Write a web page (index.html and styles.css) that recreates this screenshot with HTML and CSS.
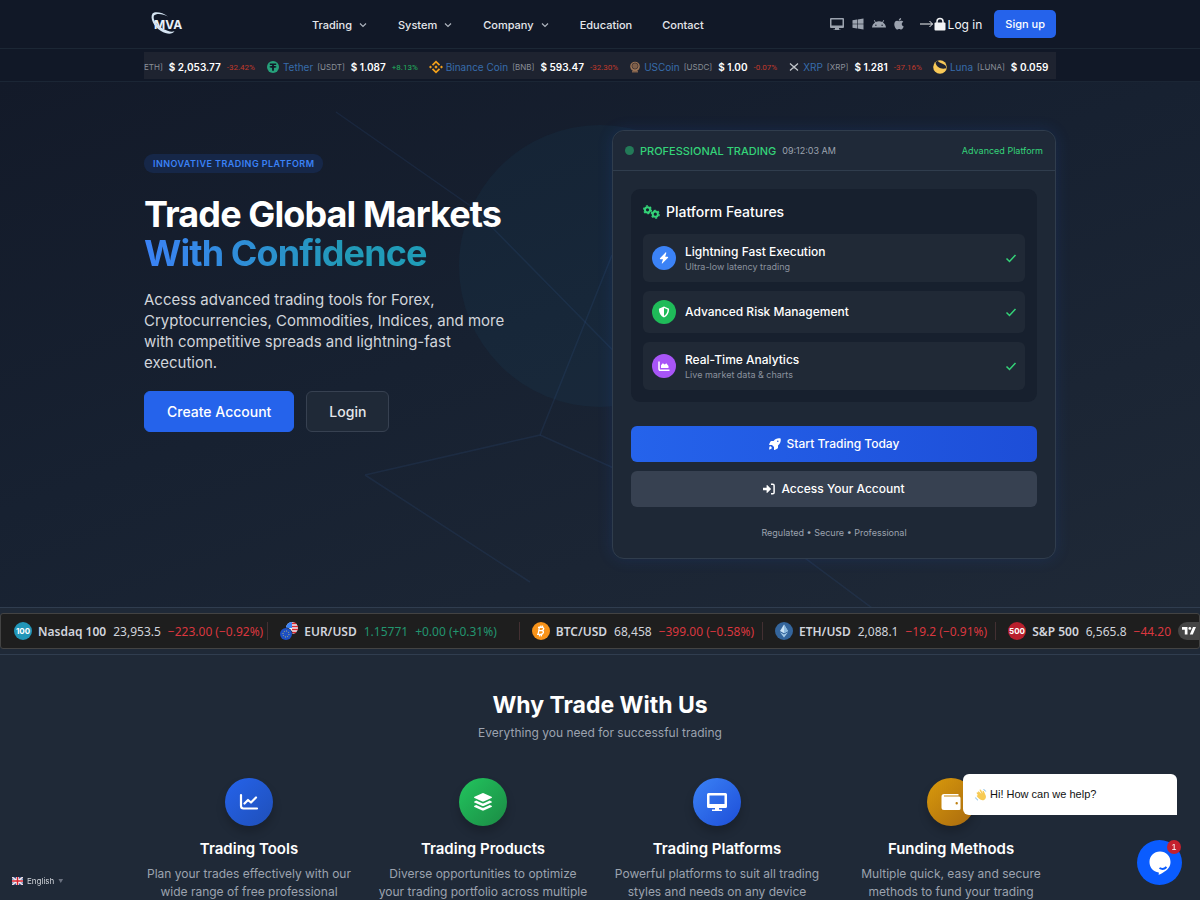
FILE: index.html
```html
<!DOCTYPE html>
<html lang="en">
<head>
<meta charset="utf-8">
<meta name="viewport" content="width=device-width, initial-scale=1">
<title>MVA – Trade Global Markets With Confidence</title>
<link rel="stylesheet" href="styles.css">
</head>
<body>
<header class="site-header">
  <div class="container header-row">
    <a class="logo" href="#" aria-label="MVA home">
      <svg width="42" height="28" viewBox="0 0 42 28">
        <text class="logo-text" x="10" y="19">MVA</text>
        <path d="M24 6.500C19 2.500 11 1 8.500 3.500C5.500 8 10 17 17 21C23 24.500 28.500 24.500 30.500 21C28 22.500 24 21.500 18.500 18.500C12 15 8.500 9 10 5.500C12 3 19 3.500 24 6.500z" fill="#d5e4f2"/>
      </svg>
    </a>
    <nav class="main-nav" aria-label="Main">
      <a href="#">Trading <svg class="chev" viewBox="0 0 10 10"><path d="M2 3.500l3 3 3-3"/></svg></a>
      <a href="#">System <svg class="chev" viewBox="0 0 10 10"><path d="M2 3.500l3 3 3-3"/></svg></a>
      <a href="#">Company <svg class="chev" viewBox="0 0 10 10"><path d="M2 3.500l3 3 3-3"/></svg></a>
      <a href="#">Education</a>
      <a href="#">Contact</a>
    </nav>
    <div class="header-actions">
      <div class="platforms">
        <a href="#" aria-label="Desktop"><svg width="14" height="14" viewBox="0 0 14 14"><path fill-rule="evenodd" d="M1 1h12a1 1 0 0 1 1 1v8a1 1 0 0 1-1 1H9v1.500h1.500V13h-7v-.5H5V11H1a1 1 0 0 1-1-1V2a1 1 0 0 1 1-1zm.5 1.500v6h11v-6z"/></svg></a>
        <a href="#" aria-label="Windows"><svg width="12" height="12" viewBox="0 0 12 12"><path d="M.5 2.200L5 1.500v4.200H.5zM5.600 1.400L11.500.5v5.200H5.600zM.5 6.300H5v4.200l-4.500-.7zM5.600 6.300h5.900v5.200l-5.900-.9z"/></svg></a>
        <a href="#" aria-label="Android"><svg width="14" height="10" viewBox="0 0 14 10"><path fill-rule="evenodd" d="M0 8.500C.2 6 1.400 4.500 3 3.400L1.800 1.300l.7-.4 1.200 2.100c2-.9 4.600-.9 6.600 0L11.500.9l.7.400L11 3.400c1.600 1.100 2.800 2.600 3 5.100zM3.200 6.300a.7.700 0 1 0 1.400 0 .7.700 0 1 0-1.400 0zm6.200 0a.7.700 0 1 0 1.400 0 .7.700 0 1 0-1.400 0z"/></svg></a>
        <a href="#" aria-label="Apple"><svg width="10" height="12" viewBox="0 0 10 12"><path d="M7.800 6.200c0-1.200.6-1.800 1.500-2.400-.6-.8-1.400-1.100-2.200-1.100-.9 0-1.500.5-2 .5s-1.200-.5-2-.5C1.300 2.800.3 4.300.3 6.200c0 2.300 1.600 5.300 3 5.300.7 0 1-.5 1.900-.5s1.100.5 1.900.500c1.200 0 2.200-1.900 2.600-3-1.200-.5-1.900-1.300-1.900-2.300zM6.500 1.900C7 1.300 7.200.7 7.100 0 6.400.1 5.700.500 5.300 1c-.4.500-.7 1-.6 1.600.7 0 1.400-.2 1.800-.7z"/></svg></a>
      </div>
      <a class="login-link" href="#">
        <svg width="14" height="12" viewBox="0 0 14 12"><path d="M0 6h12.500M9.500 3l3 3-3 3" fill="none" stroke="#f3f4f6"/></svg>
        <svg width="12" height="14" viewBox="0 0 12 14"><path d="M3 6V4.500a3 3 0 0 1 6 0V6" fill="none" stroke="#f3f4f6" stroke-width="1.500"/><rect x=".5" y="5.500" width="11" height="8" rx="1" fill="#f3f4f6"/></svg>
        <span>Log in</span>
      </a>
      <a class="btn-signup" href="#">Sign up</a>
    </div>
  </div>
</header>

<div class="coin-bar">
  <div class="container">
    <div class="coin-ticker">
      <div class="coin"><span class="sym">ETH]</span><b>$ 2,053.77</b><span class="chg down">-32.42%</span></div>
      <div class="coin"><svg class="coin-icon" viewBox="0 0 14 14"><circle cx="7" cy="7" r="6" fill="#26a17b"/><path d="M3.800 3.500h6.400v1.600H7.900v1c1.500.1 2.600.4 2.600.8s-1.100.7-2.600.8v3H6.100v-3c-1.500-.1-2.600-.4-2.600-.8s1.100-.7 2.600-.8v-1H3.800z" fill="#111827"/></svg><a href="#">Tether</a><span class="sym">[USDT]</span><b>$ 1.087</b><span class="chg up">+8.13%</span></div>
      <div class="coin"><svg class="coin-icon" viewBox="0 0 14 14"><g fill="none" stroke="#f3a11b" stroke-width="1.800"><path d="M3.500 5.200L7 1.700l3.500 3.500M3.500 8.800L7 12.300l3.500-3.500"/></g><path d="M7 5.300L8.700 7 7 8.700 5.300 7zM1.500 5.500L3 7 1.500 8.500 0 7zM12.500 5.500L14 7l-1.500 1.500L11 7z" fill="#f3a11b"/></svg><a href="#">Binance Coin</a><span class="sym">[BNB]</span><b>$ 593.47</b><span class="chg down">-32.30%</span></div>
      <div class="coin"><svg class="coin-icon narrow" viewBox="0 0 12 14"><circle cx="6" cy="6.500" r="4.800" fill="#9b7355"/><path d="M3 11h6v1.500H3z" fill="#80604b"/><circle cx="6" cy="6" r="3" fill="none" stroke="#493a36"/><path d="M4 5h4M4 7h4" stroke="#493a36" stroke-width=".7"/></svg><a href="#">USCoin</a><span class="sym">[USDC]</span><b>$ 1.00</b><span class="chg down">-0.07%</span></div>
      <div class="coin"><svg class="coin-icon narrow" viewBox="0 0 12 14"><path d="M2 3.500l2.500 2.300a2.200 2.200 0 0 0 3 0L10 3.500M2 10.500l2.500-2.300a2.200 2.200 0 0 1 3 0L10 10.500" fill="none" stroke="#c3c7cc" stroke-width="1.200"/></svg><a href="#">XRP</a><span class="sym">[XRP]</span><b>$ 1.281</b><span class="chg down">-37.16%</span></div>
      <div class="coin"><svg class="coin-icon" viewBox="0 0 14 14"><circle cx="7" cy="7" r="6.800" fill="#f8c957"/><path d="M2.500 2.500C3.500 7.500 8 9.500 13.200 8.300C13.800 6.500 12 4.500 9 3.500C6.500 2.700 4.500 1.500 5 .5C4 1 3 1.700 2.500 2.500z" fill="#202431"/></svg><a href="#">Luna</a><span class="sym">[LUNA]</span><b>$ 0.059</b></div>
    </div>
  </div>
</div>

<main>
<section class="hero">
  <svg class="hero-art" viewBox="0 0 1200 525" preserveAspectRatio="xMidYMid slice" aria-hidden="true">
    <circle cx="600" cy="184" r="141" fill="#1f8fb8" fill-opacity=".06"/>
    <g fill="none" stroke="#3b6fb0" stroke-opacity=".13" stroke-width="1.500"><path d="M336 30L472 125 650 306"/><path d="M365 393L540 353 612 173M365 393L530 500"/><path d="M540 353L790 465 872 526"/></g>
  </svg>
  <div class="container hero-grid">
    <div class="hero-copy">
      <span class="pill">INNOVATIVE TRADING PLATFORM</span>
      <h1>Trade Global Markets<br><span class="grad">With Confidence</span></h1>
      <p class="lead">Access advanced trading tools for Forex, Cryptocurrencies, Commodities, Indices, and more with competitive spreads and lightning-fast execution.</p>
      <div class="cta-row">
        <a class="cta cta-primary" href="#">Create Account</a>
        <a class="cta cta-ghost" href="#">Login</a>
      </div>
    </div>

    <div class="card">
      <div class="card-head">
        <span class="dot"></span>
        <span class="card-title">PROFESSIONAL TRADING</span>
        <time class="clock">09:12:03 AM</time>
        <span class="tag">Advanced Platform</span>
      </div>
      <div class="card-body">
        <div class="panel">
          <h2 class="panel-title"><svg width="17" height="14" viewBox="0 0 17 14"><g fill="none" stroke="#34d378"><circle cx="4.500" cy="4.800" r="2.600" stroke-width="2"/><circle cx="4.500" cy="4.800" r="3.900" stroke-width="1.300" stroke-dasharray="2.040"/><circle cx="12.300" cy="9.200" r="2.600" stroke-width="2"/><circle cx="12.300" cy="9.200" r="3.900" stroke-width="1.300" stroke-dasharray="2.040"/></g></svg>Platform Features</h2>
          <ul class="feature-list">
            <li>
              <span class="badge blue"><svg width="12" height="12" viewBox="0 0 12 12"><path d="M7.500.5L2 6.300c-.3.4-.1.900.4.900H5L3.800 11c-.2.600.3.700.7.300L10 5.700c.4-.4.100-.9-.4-.9H7.200L8.300 1c.1-.6-.4-.9-.8-.5z"/></svg></span>
              <span class="ft"><strong>Lightning Fast Execution</strong><small>Ultra-low latency trading</small></span>
              <svg class="tick" viewBox="0 0 12 12"><path d="M1.500 6.500l3 3 6-6.500"/></svg>
            </li>
            <li>
              <span class="badge green"><svg width="12" height="12" viewBox="0 0 12 12"><path fill-rule="evenodd" d="M6 .5l4.600 1.900c.4.200.5.500.5.800C11 7 9.300 10 6 11.500 2.700 10 1 7 .9 3.200c0-.3.100-.6.500-.8zM6 2v8c2.300-1.200 3.500-3.500 3.600-6.400z"/></svg></span>
              <span class="ft"><strong>Advanced Risk Management</strong></span>
              <svg class="tick" viewBox="0 0 12 12"><path d="M1.500 6.500l3 3 6-6.500"/></svg>
            </li>
            <li>
              <span class="badge purple"><svg width="12" height="12" viewBox="0 0 12 12"><path d="M1 1.500V9a1.200 1.200 0 0 0 1.200 1.200H11.500" fill="none" stroke="#fff" stroke-width="1.500"/><path d="M3 8V5.200l1.800-2 2 1.300 1.500-1.200L10.500 6v2z"/></svg></span>
              <span class="ft"><strong>Real-Time Analytics</strong><small>Live market data &amp; charts</small></span>
              <svg class="tick" viewBox="0 0 12 12"><path d="M1.500 6.500l3 3 6-6.500"/></svg>
            </li>
          </ul>
        </div>
        <div class="card-actions">
          <a class="wide wide-primary" href="#"><svg width="12" height="12" viewBox="0 0 12 12"><path fill-rule="evenodd" d="M11.600.4C8.500-.2 6.200.8 4.600 3H2.400c-.4 0-.7.200-.9.500L.1 6.200c-.2.400 0 .8.500.8H3l2 2v2.400c0 .5.400.7.800.5l2.700-1.400c.3-.2.500-.5.500-.9V7.400c2.200-1.600 3.200-3.900 2.600-7zM8 3.300a.8.800 0 1 0 1.600 0 .8.800 0 1 0-1.600 0z"/><path d="M.7 8.600c.9-.9 2.700 1 1.900 2C2 11.300.2 11.700.2 11.700S.1 9.200.7 8.600z"/></svg>Start Trading Today</a>
          <a class="wide wide-muted" href="#"><svg width="12" height="12" viewBox="0 0 12 12"><path d="M8 1.300h1.800a1.300 1.300 0 0 1 1.300 1.300v6.800a1.300 1.300 0 0 1-1.300 1.300H8" fill="none" stroke="#fff" stroke-width="1.500"/><path d="M0 4.800h3.600V2.600c0-.5.500-.6.800-.4l3.500 3.500c.2.200.2.400 0 .6L4.400 9.800c-.3.300-.8.100-.8-.4V7.200H0z"/></svg>Access Your Account</a>
        </div>
        <p class="card-note">Regulated • Secure • Professional</p>
      </div>
    </div>
  </div>
</section>

<section class="market-strip" aria-label="Market quotes">
  <div class="quotes">
    <div class="quote"><svg class="q-icon" viewBox="0 0 18 18"><circle cx="9" cy="9" r="9" fill="#2196b8"/><text class="q-num" x="9" y="12">100</text></svg><b>Nasdaq 100</b><span>23,953.5</span><span class="neg">−223.00 (−0.92%)</span></div>
    <div class="quote q-eur"><svg class="q-icon" viewBox="0 0 18 18"><circle cx="12" cy="6" r="6" fill="#e9eef8"/><path d="M12 0a6 6 0 0 0-6 6h6z" fill="#3b82f6"/><path d="M12 1.500h4M12 4.500h6M12 7.500h6M10 10.500h6" stroke="#d9272e" stroke-width="1.500"/><circle cx="6" cy="12" r="6.500" fill="#1e1e1e"/><circle cx="6" cy="12" r="6" fill="#1d4fc4"/><circle cx="6" cy="12" r="3" fill="none" stroke="#c9c56b" stroke-dasharray="1 1.300"/></svg><b>EUR/USD</b><span class="pos">1.15771</span><span class="pos">+0.00 (+0.31%)</span></div>
    <div class="quote q-wide"><svg class="q-icon" viewBox="0 0 18 18"><circle cx="9" cy="9" r="9" fill="#f7931a"/><path d="M7.500 4.500L6 13M6 5.300h4c2.600 0 2.200 3.300-.7 3.300H7M6.600 8.700h3.200c2.600 0 2 3.600-1.200 3.600H5M9 3.500l-.3 1.700M7.700 12.500l-.3 1.800M10.700 3.700l-.3 1.700M9.500 12.500l-.3 1.800" fill="none" stroke="#fff" stroke-width="1.300"/></svg><b>BTC/USD</b><span>68,458</span><span class="neg">−399.00 (−0.58%)</span></div>
    <div class="quote q-wide"><svg class="q-icon" viewBox="0 0 18 18"><circle cx="9" cy="9" r="9" fill="#34659c"/><path d="M9 2.500L5 9l4 2.200L13 9z" fill="#c6e0f5"/><path d="M5 10.200L9 15.500l4-5.300-4 2.200z" fill="#a5cbe9"/><path d="M9 2.500V11.200L13 9z" fill="#8ebbe0"/></svg><b>ETH/USD</b><span>2,088.1</span><span class="neg">−19.2 (−0.91%)</span></div>
    <div class="quote"><svg class="q-icon" viewBox="0 0 18 18"><circle cx="9" cy="9" r="9" fill="#b9202d"/><text class="q-num" x="9" y="12">500</text></svg><b>S&amp;P 500</b><span>6,565.8</span><span class="neg">−44.20</span></div>
    <a class="tv" href="#" aria-label="TradingView"><svg width="14" height="8" viewBox="0 0 14 8"><path d="M0 0h5.500v7.500H2.800V2.700H0zM11 0h3l-3.200 7.500h-3z" fill="#fff"/><circle cx="7.800" cy="1.400" r="1.400" fill="#fff"/></svg></a>
  </div>
</section>

<section class="why">
  <div class="container">
    <h2>Why Trade With Us</h2>
    <p class="why-sub">Everything you need for successful trading</p>
    <div class="why-grid">
      <article>
        <span class="orb orb-blue"><svg width="20" height="20" viewBox="0 0 20 20"><path d="M2 3v11a2.500 2.500 0 0 0 2.500 2.500H18" class="ln"/><path d="M5.500 11.500L9 8l3 2.500 5-5" class="ln"/></svg></span>
        <h3>Trading Tools</h3><p>Plan your trades effectively with our wide range of free professional</p>
      </article>
      <article>
        <span class="orb orb-green"><svg width="20" height="20" viewBox="0 0 20 20"><path d="M9.300 1.200a1.500 1.500 0 0 1 1.400 0L18.500 4.700c.6.300.6 1 0 1.300l-7.800 3.500c-.5.200-1 .2-1.400 0L1.500 6c-.6-.3-.6-1 0-1.300zM3.200 8.600l5.500 2.500c.8.400 1.800.4 2.600 0l5.500-2.500 1.700.8c.6.300.6.900 0 1.200l-7.800 3.500c-.5.200-1 .2-1.400 0l-7.800-3.500c-.6-.3-.6-.9 0-1.200zM3.200 13l5.500 2.500c.8.400 1.800.4 2.600 0l5.500-2.500 1.700.8c.6.300.6.900 0 1.200l-7.800 3.500c-.5.200-1 .2-1.400 0L1.500 15c-.6-.3-.6-.9 0-1.200z"/></svg></span>
        <h3>Trading Products</h3><p>Diverse opportunities to optimize your trading portfolio across multiple</p>
      </article>
      <article>
        <span class="orb orb-sky"><svg width="22" height="20" viewBox="0 0 22 20"><path fill-rule="evenodd" d="M2.500 1h17A1.500 1.500 0 0 1 21 2.500v12a1.500 1.500 0 0 1-1.500 1.500H13v1.500h3V19H6v-1.500h3V16H2.500A1.500 1.500 0 0 1 1 14.500v-12A1.500 1.500 0 0 1 2.500 1zM3.500 3.500v8.500h15V3.500z"/></svg></span>
        <h3>Trading Platforms</h3><p>Powerful platforms to suit all trading styles and needs on any device</p>
      </article>
      <article>
        <span class="orb orb-gold"><svg width="20" height="18" viewBox="0 0 20 18"><path fill-rule="evenodd" d="M3 1h14.500v1.500H3v1h15a1.500 1.500 0 0 1 1.500 1.500v10.500a1.500 1.500 0 0 1-1.500 1.500H3A2.500 2.500 0 0 1 .5 14.500v-11A2.500 2.500 0 0 1 3 1zM14.500 10.300a1.200 1.200 0 1 0 2.400 0 1.200 1.200 0 1 0-2.400 0z"/></svg></span>
        <h3>Funding Methods</h3><p>Multiple quick, easy and secure methods to fund your trading</p>
      </article>
    </div>
  </div>
</section>
</main>

<button class="lang" type="button"><svg width="11" height="8" viewBox="0 0 11 8"><path d="M0 0h11v8H0z" fill="#33539b"/><path d="M0 0l11 8M11 0L0 8" stroke="#f0dfe0" stroke-width="1.600"/><path d="M5.500 0v8M0 4h11" stroke="#fff" stroke-width="2.800"/><path d="M5.500 0v8M0 4h11" stroke="#d8222f" stroke-width="1.500"/></svg>English<span class="caret">▼</span></button>

<div class="chat-bubble"><svg width="12" height="12" viewBox="0 0 12 12"><path d="M3.500 2l3 3-2-4c.5-.8 1.300-.5 1.600 0l1.700 3.200L7.500 2c.8-.4 1.300.1 1.600.7l1.700 4c.7 2.600-1.300 4.600-3.300 4.500C5 11 3 8.800 1.700 7c0-.9.700-1 1.300-.7L1.500 4c.2-.8.900-.9 1.500-.3z" fill="#f7ca54"/><path d="M8.500.5c1 .2 1.900 1 2.200 2M.7 8.500c.3 1.300 1 2.200 2.300 2.500" fill="none" stroke="#7cb8e4"/></svg>Hi! How can we help?</div>
<button class="chat-btn" type="button" aria-label="Open chat">
  <svg width="24" height="26" viewBox="0 0 24 26"><path d="M12 1.500c6 0 10.500 4.500 10.500 10.500 0 5.500-4 8.500-7 10.200-2 1.300-3.800 2.200-5 2.600.4-1 .4-1.600.3-2.400C5 21.500 1.500 17.500 1.500 12 1.500 6 6 1.500 12 1.500z" fill="#fff"/><path d="M11.500 18c2 1.200 5 1 7-1" fill="none" stroke="#0a5cff" stroke-width="2"/></svg>
  <span class="count">1</span>
</button>
</body>
</html>
```
FILE: styles.css
```css
* { box-sizing: border-box; }
body {
  margin: 0;
  height: 100vh;
  overflow: hidden;
  background: #1f2937;
  color: #fff;
  font-family: Inter, "Liberation Sans", sans-serif;
}
a { color: inherit; text-decoration: none; }
h1, h2, h3, p, ul { margin: 0; padding: 0; }
button { border: 0; font-family: inherit; cursor: pointer; }
svg { display: block; flex: none; }
.container { width: 76%; max-width: 1280px; margin: 0 auto; }

/* Header */
.site-header { background: #111827; border-bottom: 1px solid #1c2735; }
.header-row { display: flex; align-items: center; justify-content: space-between; height: 48px; }
.logo-text { font: 700 12px Inter, sans-serif; fill: #e8f1fa; }
.main-nav { display: flex; gap: 30px; padding-top: 2px; font-size: 11px; font-weight: 500; line-height: 16px; color: #e5e7eb; }
.main-nav a { display: flex; align-items: center; gap: 6px; }
.chev { width: 10px; height: 10px; fill: none; stroke: #aeb4be; stroke-width: 1.2; }
.header-actions { display: flex; align-items: center; gap: 12px; }
.platforms { display: flex; align-items: center; gap: 8px; margin-right: 4px; fill: #9ca3af; }
.login-link { display: flex; align-items: center; font-size: 12px; color: #f3f4f6; }
.login-link span { margin-left: 2px; }
.btn-signup { padding: 6px 11px; border-radius: 5px; background: #2563eb; font-size: 11px; font-weight: 500; line-height: 16px; }

/* Crypto ticker */
.coin-bar { padding: 3px 0 2px; background: #111827; border-bottom: 1px solid #1b2635; }
.coin-ticker { display: flex; gap: 11px; height: 27px; padding-top: 4px; overflow: hidden; background: #1e2330; white-space: nowrap; }
.coin { display: flex; align-items: center; flex: none; height: 22px; font-size: 10px; }
.coin a { margin-left: 3px; color: #376cab; }
.coin b { margin: 0 6px; font-weight: 600; }
.coin .sym { margin-left: 4px; font-size: 8px; color: #8a8f98; }
.coin:first-child .sym { margin-left: 0; }
.chg { font-family: Roboto, sans-serif; font-size: 8px; }
.chg.down { color: #c0392b; }
.chg.up { color: #22b45f; }
.coin-icon { width: 14px; height: 14px; }
.coin-icon.narrow { width: 12px; }

/* Hero */
.hero { position: relative; padding: 48px 0; background: linear-gradient(160deg, #131a29 0%, #172131 45%, #1f2937 100%); }
.hero-art { position: absolute; inset: 0; width: 100%; height: 100%; }
.hero-grid { position: relative; display: grid; grid-template-columns: 1fr 1fr; gap: 24px; }
.hero-copy { padding-top: 24px; }
.pill { display: block; width: fit-content; padding: 3px 9px; border-radius: 9px; background: #162748; color: #3b82f6; font-size: 9px; font-weight: 600; line-height: 13px; letter-spacing: 0.05em; }
h1 { margin-top: 22px; font-size: 36px; font-weight: 700; line-height: 39px; letter-spacing: -0.025em; }
.grad { background: linear-gradient(90deg, #3b82f6, #2299b8 70%, #1f9db8); background-clip: text; -webkit-background-clip: text; color: transparent; }
.lead { max-width: 384px; margin-top: 16px; color: #d1d5db; font-size: 15px; line-height: 21px; }
.cta-row { display: flex; gap: 12px; margin-top: 18px; }
.cta { padding: 9px 22px; border: 1px solid #2563eb; border-radius: 6px; font-size: 14px; font-weight: 500; line-height: 21px; }
.cta-primary { background: #2563eb; }
.cta-ghost { border-color: #374151; background: #1f2937; color: #e5e7eb; }

/* Trading card */
.card { border: 1px solid #303d4d; border-radius: 12px; background: #1e2836; box-shadow: 0 0 16px rgba(37, 99, 235, 0.14); }
.card-head { display: flex; align-items: center; height: 40px; padding: 0 12px; border-bottom: 1px solid #303d4d; border-radius: 12px 12px 0 0; background: #1f2938; color: #34d378; }
.dot { width: 9px; height: 9px; border-radius: 50%; background: #237a58; }
.card-title { margin: 0 6px; font-size: 11px; font-weight: 500; }
.clock { font-size: 9px; color: #9ca3af; }
.tag { margin-left: auto; font-size: 9px; }
.card-body { padding: 18px; }
.panel { padding: 12px; border-radius: 9px; background: #17202e; }
.panel-title { display: flex; align-items: center; gap: 6px; margin-bottom: 12px; font-size: 14px; font-weight: 500; line-height: 21px; }
.feature-list { display: grid; gap: 9px; list-style: none; }
.feature-list li { display: flex; align-items: center; gap: 9px; padding: 9px 8px 9px 9px; border-radius: 6px; background: #202936; }
.badge { display: grid; place-items: center; flex: none; width: 24px; height: 24px; border-radius: 50%; fill: #fff; }
.blue { background: #3b82f6; }
.green { background: #1fbb59; }
.purple { background: #a855f7; }
.ft { display: grid; flex: 1; }
.ft strong { font-size: 12px; font-weight: 500; line-height: 18px; }
.ft small { font-size: 9px; line-height: 12px; color: #8b929e; }
.ft strong:only-child { line-height: 24px; }
.tick { width: 12px; height: 12px; fill: none; stroke: #34d378; stroke-width: 1.5; }
.card-actions { display: grid; gap: 9px; margin-top: 24px; }
.wide { display: flex; align-items: center; justify-content: center; gap: 6px; padding: 9px; border-radius: 6px; font-size: 12px; font-weight: 500; line-height: 18px; fill: #fff; }
.wide-primary { background: linear-gradient(90deg, #2563eb, #1d4ed8); }
.wide-muted { background: #374151; }
.card-note { margin-top: 18px; color: #9ca3af; font-size: 9px; line-height: 15px; text-align: center; }

/* Market strip */
.market-strip { padding: 5px 0; border-top: 1px solid #303d4f; border-bottom: 1px solid #303d4f; background: #1f2937; }
.quotes { position: relative; display: flex; align-items: center; height: 36px; padding-left: 13px; overflow: hidden; border: 1px solid #434343; border-radius: 3px; background: #1e1e1e; }
.quote { display: flex; align-items: center; flex: none; gap: 7px; height: 18px; margin-right: 12px; padding-right: 4px; border-right: 1px solid #433032; color: #d1d4dc; font-family: "Noto Sans", sans-serif; font-size: 12px; white-space: nowrap; }
.quote b { margin-left: -1px; font-weight: 600; }
.quote:nth-last-child(2) { border-right: 0; }
.q-eur { padding-right: 22px; }
.q-wide { padding-right: 8px; }
.q-icon { width: 18px; height: 18px; }
.q-num { font: 700 8px Inter, sans-serif; fill: #fff; text-anchor: middle; }
.neg { color: #d9373f; }
.pos { color: #22956f; }
.tv { position: absolute; right: 0; top: 8px; display: grid; place-items: center; width: 21px; height: 18px; border-radius: 9px 0 0 9px; background: #454545; }

/* Why trade */
.why { padding-top: 34px; text-align: center; }
.why h2 { font-size: 23px; font-weight: 700; line-height: 32px; }
.why-sub { margin-top: 3px; color: #9ca3af; font-size: 12px; line-height: 18px; }
.why-grid { display: grid; grid-template-columns: repeat(4, 1fr); gap: 24px; margin-top: 36px; }
.orb { display: grid; place-items: center; width: 48px; height: 48px; margin: 0 auto 12px; border-radius: 50%; box-shadow: 0 6px 10px rgba(0, 0, 0, 0.2); fill: #fff; }
.orb-blue { background: linear-gradient(135deg, #2563eb, #1f4fb8); }
.orb-green { background: linear-gradient(135deg, #22c55e, #1b8a44); }
.orb-sky { background: linear-gradient(135deg, #3b82f6, #1d4ed8); }
.orb-gold { background: linear-gradient(135deg, #d99a0b, #a8690f); }
.ln { fill: none; stroke: #fff; stroke-width: 2.2; stroke-linecap: round; stroke-linejoin: round; }
.why h3 { font-size: 15px; font-weight: 600; line-height: 21px; }
.why article p { margin-top: 6px; color: #9ca3af; font-size: 12px; line-height: 18px; }

/* Floating widgets */
.lang { position: fixed; left: 12px; bottom: 13px; display: flex; align-items: center; gap: 4px; padding: 0; background: none; color: #d1d5db; font-size: 8px; line-height: 12px; }
.caret { color: #6b7280; font-size: 5px; }
.chat-bubble { position: fixed; right: 23px; bottom: 85px; display: flex; align-items: center; gap: 3px; width: 214px; padding: 12px; border-radius: 6px 6px 0 6px; background: #fff; color: #111; font: 11px/17px "Liberation Sans", Arial, sans-serif; }
.chat-btn { position: fixed; right: 18px; bottom: 15px; display: grid; place-items: center; width: 45px; height: 45px; padding: 0; border-radius: 50%; background: #0a5cff; }
.count { position: absolute; top: 0; right: 1px; width: 14px; height: 14px; border-radius: 50%; background: #c4202e; color: #fff; font: 9px/14px "Liberation Sans", Arial, sans-serif; }
```
